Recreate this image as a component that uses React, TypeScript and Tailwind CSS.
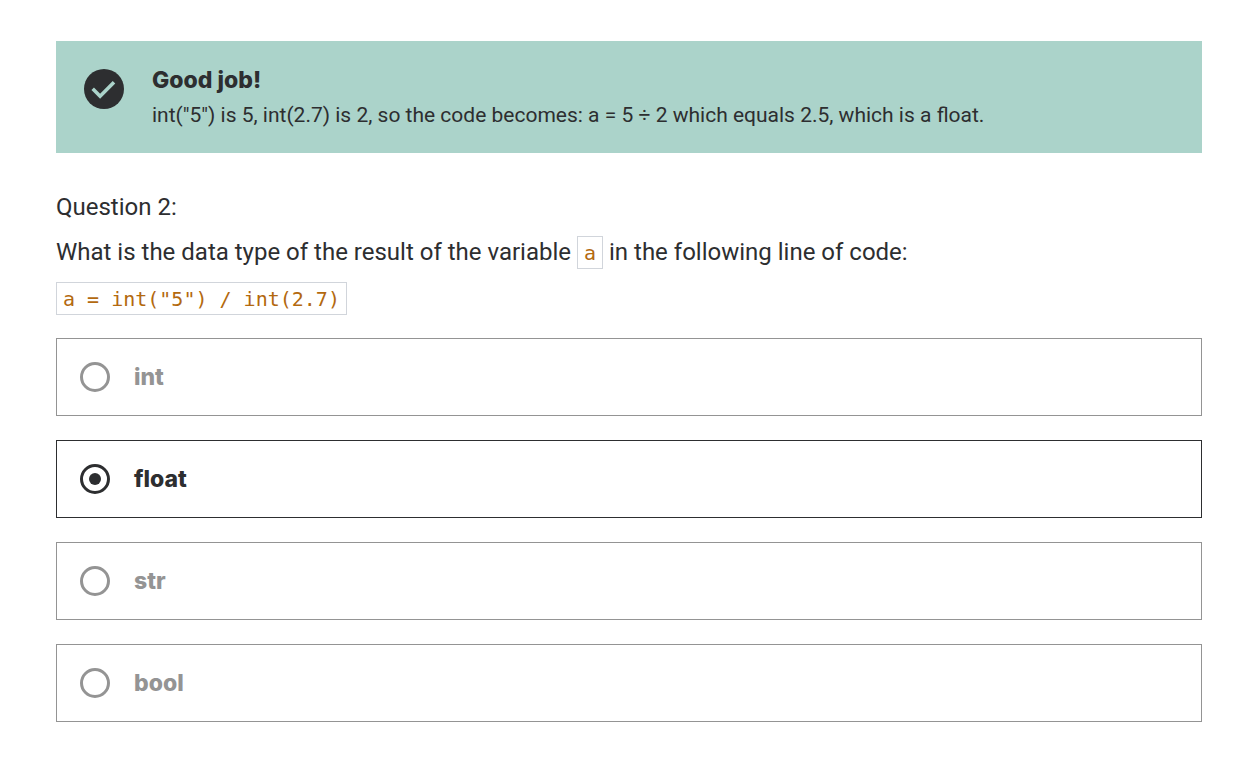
import { useState } from "react";

const options = ["int", "float", "str", "bool"];

function Code({ children }: { children: string }) {
  return (
    <code className="inline-block border border-[#d1d5db] bg-white px-1.5 pt-0.5 font-['DejaVu_Sans_Mono',monospace] text-[20px] leading-[29px] text-[#b3690f]">
      {children}
    </code>
  );
}

function Feedback() {
  return (
    <section role="status" className="flex gap-7 bg-[#abd3ca] px-7 py-[21px]">
      <svg viewBox="0 0 40 40" className="mt-[7px] size-10 shrink-0" aria-hidden="true">
        <circle cx="20" cy="20" r="20" fill="#2d2e30" />
        <path d="M8.7 19.8 16.1 27.2 30 13.2" fill="none" stroke="#abd3ca" strokeWidth="3.6" />
      </svg>
      <div>
        <h2 className="font-[Inter,sans-serif] text-[23px] leading-9 font-extrabold">Good job!</h2>
        <p className="text-[21px] leading-[34px]">
          int("5") is 5, int(2.7) is 2, so the code becomes: a = 5 ÷ 2 which equals 2.5, which is a
          float.
        </p>
      </div>
    </section>
  );
}

export default function App() {
  const [selected, setSelected] = useState("float");

  return (
    <main className="bg-white pt-[41px] pr-12 pb-[59px] pl-14 font-[Roboto,sans-serif] text-[#2d2e30]">
      <Feedback />
      <fieldset className="mt-9">
        <legend className="text-[24px] leading-9">
          <p>Question 2:</p>
          <p className="mt-[9px]">
            What is the data type of the result of the variable <Code>a</Code> in the following line
            of code:
          </p>
          <p className="mt-2.5">
            <Code>{'a = int("5") / int(2.7)'}</Code>
          </p>
        </legend>
        <div className="mt-[22px] flex flex-col gap-6">
          {options.map((option) => (
            <label
              key={option}
              className="flex h-[78px] items-center gap-6 border border-[#949494] px-[23px] font-[Inter,sans-serif] text-[23px] font-extrabold text-[#949494] has-checked:border-[#2d2e30] has-checked:text-[#2d2e30]"
            >
              <input
                type="radio"
                name="answer"
                value={option}
                checked={selected === option}
                onChange={() => setSelected(option)}
                className="grid size-[30px] shrink-0 appearance-none place-content-center rounded-full border-3 border-current before:size-3 before:rounded-full checked:before:bg-current"
              />
              {option}
            </label>
          ))}
        </div>
      </fieldset>
    </main>
  );
}
